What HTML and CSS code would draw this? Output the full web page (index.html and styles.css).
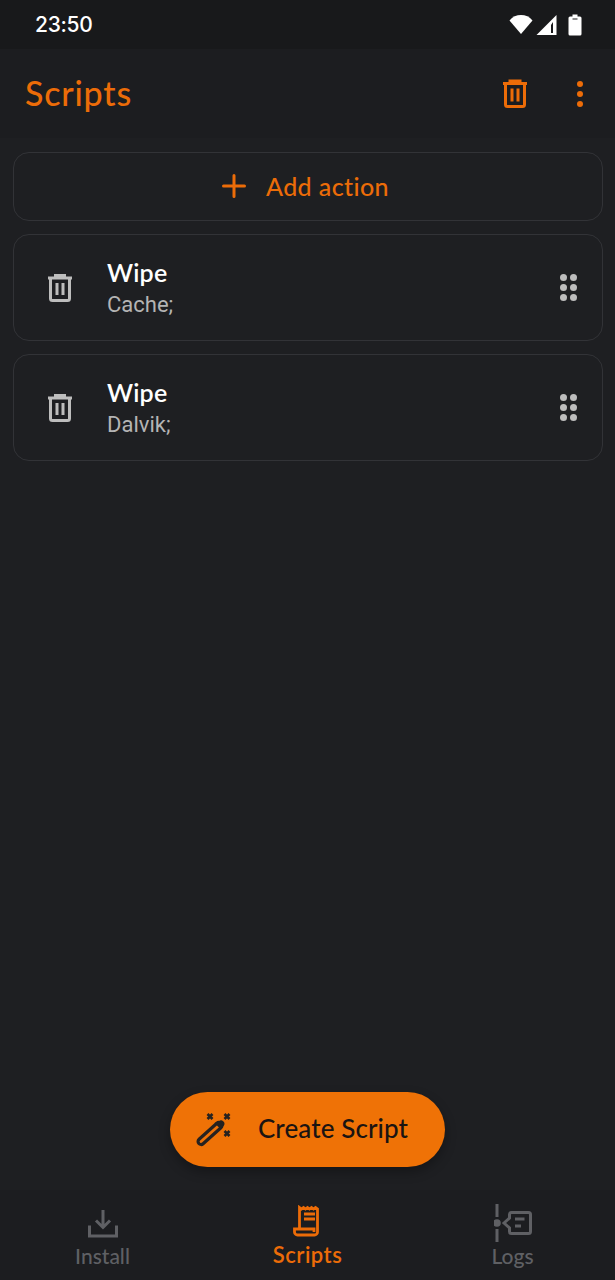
FILE: index.html
```html
<!DOCTYPE html>
<html lang="en">
  <head>
    <meta charset="UTF-8" />
    <meta name="viewport" content="width=device-width, initial-scale=1.0" />
    <title>Scripts</title>
    <link rel="stylesheet" href="styles.css">
  </head>
  <body>
    <div class="status-bar">
      <span class="status-time">23:50</span>
      <div class="status-icons">
        <svg width="24" height="21" viewBox="0 0 24 21"><path d="M0.500 6.500C3.500 2.800 7.500 1 12 1s8.500 1.800 11.500 5.500L12 20z" fill="#fff"/></svg>
        <svg width="21" height="22" viewBox="0 0 21 22"><path d="M20.500 1v20H0.500zM15 11v8h2V8z" fill="#fff" fill-rule="evenodd"/></svg>
        <svg class="icon-battery" width="14" height="22" viewBox="0 0 14 22"><path d="M4.500 .5h5v2H12a1.500 1.500 0 0 1 1.500 1.500V20a1.500 1.500 0 0 1-1.500 1.500H2A1.500 1.500 0 0 1 .5 20V4A1.500 1.500 0 0 1 2 2.500h2.500zM4.500 4.500v1h5v-1z" fill="#fff" fill-rule="evenodd"/></svg>
      </div>
    </div>

    <header class="app-bar">
      <h1 class="app-title">Scripts</h1>
      <svg class="bar-trash" width="26" height="31" viewBox="0 0 26 31"><path d="M1 5.500h24M8 5.500V3h10v2.500M3.500 5.500v21a2 2 0 0 0 2 2h15a2 2 0 0 0 2-2v-21M10 10.500v13M16 10.500v13" fill="none" stroke="#ec6c08" stroke-width="3"/></svg>
      <div class="bar-more"><i></i><i></i><i></i></div>
    </header>

    <main class="content">
      <div class="card add-card">
        <svg width="24" height="24" viewBox="0 0 24 24"><path d="M12 1.500v21M1.500 12h21" stroke="#ec6c08" stroke-width="3" stroke-linecap="round"/></svg>
        <span class="add-label">Add action</span>
      </div>

      <div class="card action-card">
        <svg class="action-trash" width="24" height="30" viewBox="0 0 24 30"><path d="M0 5h24M7.500 5V2.500h9V5M2.500 5v20.500a2 2 0 0 0 2 2h15a2 2 0 0 0 2-2V5M9 10v12M15 10v12" fill="none" stroke="#bdbdbd" stroke-width="3"/></svg>
        <div class="action-text">
          <div class="action-title">Wipe</div>
          <div class="action-sub">Cache;</div>
        </div>
        <div class="drag"><i></i><i></i><i></i><i></i><i></i><i></i></div>
      </div>

      <div class="card action-card">
        <svg class="action-trash" width="24" height="30" viewBox="0 0 24 30"><path d="M0 5h24M7.500 5V2.500h9V5M2.500 5v20.500a2 2 0 0 0 2 2h15a2 2 0 0 0 2-2V5M9 10v12M15 10v12" fill="none" stroke="#bdbdbd" stroke-width="3"/></svg>
        <div class="action-text">
          <div class="action-title">Wipe</div>
          <div class="action-sub">Dalvik;</div>
        </div>
        <div class="drag"><i></i><i></i><i></i><i></i><i></i><i></i></div>
      </div>
    </main>

    <button class="fab">
      <svg width="36" height="36" viewBox="0 0 36 36">
        <rect x="-3" y="-15" width="6" height="30" rx="3" transform="translate(14 21.500) rotate(48)" fill="none" stroke="#262220" stroke-width="3.200"/>
        <path d="M18.500 11l6 6 3-3a3 3 0 0 0 0-4.500 3 3 0 0 0-4.500-.5z" fill="#262220"/>
        <path d="M11.500 2l5 5M16.500 2l-5 5M28.500 2l5 5M33.500 2l-5 5M28.500 19l5 5M33.500 19l-5 5" stroke="#262220" stroke-width="2.600"/>
      </svg>
      <span>Create Script</span>
    </button>

    <nav class="bottom-nav">
      <div class="nav-item nav-install">
        <svg width="30" height="28" viewBox="0 0 30 28"><path d="M15 0v17M8 10.500l7 7 7-7M1.500 15.500v10.500h27V15.500" fill="none" stroke="#5f6064" stroke-width="3"/></svg>
        <span>Install</span>
      </div>
      <div class="nav-item nav-active">
        <svg width="30" height="32" viewBox="0 0 30 32"><path d="M6.500 24V2.500l2 1.500 2-1.500 2 1.500 2-1.500 2 1.500 2-1.500 2 1.500 2-1.500 2 1.500v23a3 3 0 0 1-3 3H4.500a3 3 0 0 1-3-3V24H21v3" fill="none" stroke="#ec6c08" stroke-width="2.800"/><path d="M11 9h11M11 14h11" stroke="#ec6c08" stroke-width="2.800"/></svg>
        <span>Scripts</span>
      </div>
      <div class="nav-item nav-logs">
        <svg width="38" height="38" viewBox="0 0 38 38"><path d="M3 0v13M3 25v13" stroke="#5f6064" stroke-width="3"/><circle cx="3" cy="19" r="3.800" fill="#5f6064"/><path d="M10 19l5.500-5V10.500a2 2 0 0 1 2-2h17a2 2 0 0 1 2 2v17a2 2 0 0 1-2 2h-17a2 2 0 0 1-2-2V24z" fill="none" stroke="#5f6064" stroke-width="3"/><path d="M21 15h9.500M21 22h6" stroke="#5f6064" stroke-width="3"/></svg>
        <span>Logs</span>
      </div>
    </nav>
  </body>
</html>
```

FILE: styles.css
```css
* {
  box-sizing: border-box;
}

body {
  margin: 0;
  width: 615px;
  height: 1280px;
  display: flex;
  flex-direction: column;
  position: relative;
  overflow: hidden;
  background-color: #1e1f22;
  font-family: "Lato", "Noto Sans", sans-serif;
}

.status-bar {
  height: 49px;
  flex-shrink: 0;
  display: flex;
  align-items: center;
  justify-content: space-between;
  padding: 0 33px 0 35px;
  background-color: #18191b;
}

.status-time {
  color: #fff;
  font-size: 21px;
  font-weight: 500;
  font-family: "Inter", sans-serif;
  letter-spacing: -0.3px;
}

.status-icons {
  display: flex;
  align-items: center;
  gap: 3px;
}

.icon-battery {
  margin-left: 8px;
}

.app-bar {
  height: 89px;
  flex-shrink: 0;
  display: flex;
  align-items: center;
  padding: 0 32px 0 25px;
  background-color: #1c1d20;
}

.app-title {
  flex: 1;
  margin: 0 0 2px;
  color: #ec6c08;
  font-size: 34px;
  font-weight: 500;
  line-height: 1;
  letter-spacing: 0.8px;
}

.bar-trash {
  margin-right: 49px;
}

.bar-more {
  display: flex;
  flex-direction: column;
  gap: 4px;
}

.bar-more i {
  width: 6px;
  height: 6px;
  border-radius: 50%;
  background-color: #ec6c08;
}

.content {
  flex: 1;
  display: flex;
  flex-direction: column;
  gap: 13px;
  padding: 14px 12px 0 13px;
}

.card {
  width: 590px;
  border: 1.5px solid #323337;
  border-radius: 16px;
  display: flex;
  align-items: center;
}

.add-card {
  height: 69px;
  justify-content: center;
  gap: 20px;
  padding: 0 5px 2px 0;
}

.add-label {
  color: #ec6c08;
  font-size: 25px;
  font-weight: 500;
  letter-spacing: 0.4px;
}

.action-card {
  height: 107px;
  padding: 0 25px 0 34px;
}

.action-text {
  flex: 1;
  margin-left: 35px;
}

.action-title {
  color: #fff;
  font-size: 25px;
  font-weight: 600;
  line-height: 32px;
  letter-spacing: 0.2px;
}

.action-sub {
  margin-top: 2px;
  color: #b4b4b4;
  font-family: "Roboto", sans-serif;
  font-size: 22px;
  line-height: 30px;
}

.drag {
  display: grid;
  grid-template-columns: 7px 7px;
  gap: 3px;
}

.drag i {
  width: 7px;
  height: 7px;
  border-radius: 50%;
  background-color: #bdbdbd;
}

.fab {
  position: absolute;
  left: 170px;
  top: 1092px;
  width: 275px;
  height: 75px;
  border: 0;
  border-radius: 38px;
  display: flex;
  align-items: center;
  gap: 26px;
  padding: 0 0 3px 26px;
  background-color: #ef7206;
  box-shadow: 0 5px 12px rgba(0, 0, 0, 0.3);
  color: #1a1412;
  font-family: "Lato", sans-serif;
  font-size: 26px;
  font-weight: 500;
  letter-spacing: 0.1px;
}

.fab svg {
  margin-top: 3px;
}

.bottom-nav {
  height: 90px;
  flex-shrink: 0;
  display: grid;
  grid-template-columns: 205px 205px 205px;
  background-color: #1c1d20;
}

.nav-item {
  display: flex;
  flex-direction: column;
  align-items: center;
  justify-content: flex-end;
  padding-bottom: 12px;
  gap: 2px;
  color: #5f6064;
  font-size: 21px;
  font-weight: 500;
}

.nav-install {
  gap: 5px;
}

.nav-logs {
  gap: 1px;
}

.nav-active {
  color: #ec6c08;
  padding-bottom: 12px;
  gap: 4px;
  font-size: 22px;
  font-weight: 600;
  letter-spacing: 0.5px;
}
```
